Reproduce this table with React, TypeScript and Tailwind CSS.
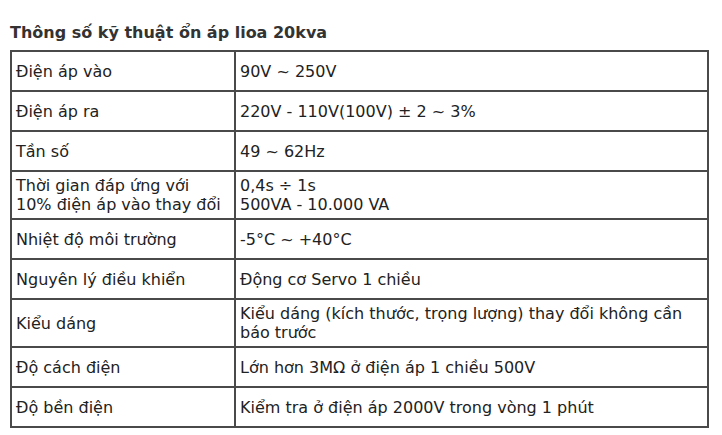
import React from "react";

const rows: { label: string[]; value: string[] }[] = [
  { label: ["Điện áp vào"], value: ["90V ~ 250V"] },
  { label: ["Điện áp ra"], value: ["220V - 110V(100V) ± 2 ~ 3%"] },
  { label: ["Tần số"], value: ["49 ~ 62Hz"] },
  {
    label: ["Thời gian đáp ứng với", "10% điện áp vào thay đổi"],
    value: ["0,4s ÷ 1s", "500VA - 10.000 VA"],
  },
  { label: ["Nhiệt độ môi trường"], value: ["-5°C ~ +40°C"] },
  { label: ["Nguyên lý điều khiển"], value: ["Động cơ Servo 1 chiều"] },
  {
    label: ["Kiểu dáng"],
    value: ["Kiểu dáng (kích thước, trọng lượng) thay đổi không cần", "báo trước"],
  },
  { label: ["Độ cách điện"], value: ["Lớn hơn 3MΩ ở điện áp 1 chiều 500V"] },
  { label: ["Độ bền điện"], value: ["Kiểm tra ở điện áp 2000V trong vòng 1 phút"] },
];

export default function App() {
  return (
    <div
      className="w-[722px] h-[435px] bg-white pl-[10px] pt-[24px] text-[#222]"
      style={{ fontFamily: '"DejaVu Sans", Verdana, sans-serif' }}
    >
      <h2 className="text-[16px] font-bold leading-[18px] text-[#333] mb-[8px]">
        Thông số kỹ thuật ổn áp lioa 20kva
      </h2>
      <table className="border-collapse w-[699px] text-[16px] leading-[19px]">
        <tbody>
          {rows.map((r) => (
            <tr key={r.label[0]} className="h-[40px]">
              <td className="w-[224px] border-2 border-[#4a4a4a] px-[4px] py-[4px] align-middle">
                {r.label.map((l) => (
                  <div key={l}>{l}</div>
                ))}
              </td>
              <td className="border-2 border-[#4a4a4a] px-[4px] py-[4px] align-middle">
                {r.value.map((v) => (
                  <div key={v}>{v}</div>
                ))}
              </td>
            </tr>
          ))}
        </tbody>
      </table>
    </div>
  );
}
